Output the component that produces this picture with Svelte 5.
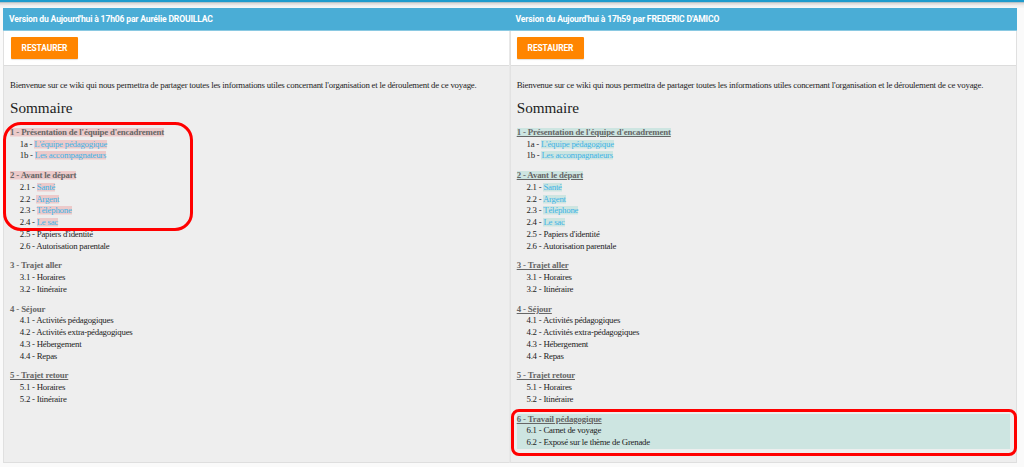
<script>
  const intro = "Bienvenue sur ce wiki qui nous permettra de partager toutes les informations utiles concernant l'organisation et le déroulement de ce voyage.";
  const sections = [
    { title: "1 - Présentation de l'équipe d'encadrement", mark: true, items: [['1a', "L'équipe pédagogique", true], ['1b', 'Les accompagnateurs', true]] },
    { title: '2 - Avant le départ', mark: true, items: [['2.1', 'Santé', true], ['2.2', 'Argent', true], ['2.3', 'Téléphone', true], ['2.4', 'Le sac', true], ['2.5', "Papiers d'identité"], ['2.6', 'Autorisation parentale']] },
    { title: '3 - Trajet aller', items: [['3.1', 'Horaires'], ['3.2', 'Itinéraire']] },
    { title: '4 - Séjour', items: [['4.1', 'Activités pédagogiques'], ['4.2', 'Activités extra-pédagogiques'], ['4.3', 'Hébergement'], ['4.4', 'Repas']] },
    { title: '5 - Trajet retour', underlined: true, items: [['5.1', 'Horaires'], ['5.2', 'Itinéraire']] }
  ];
  const added = { title: '6 - Travail pédagogique', added: true, items: [['6.1', 'Carnet de voyage'], ['6.2', 'Exposé sur le thème de Grenade']] };
  const versions = [
    { kind: 'old', label: "Version du Aujourd'hui à 17h06 par Aurélie DROUILLAC", sections },
    { kind: 'new', label: "Version du Aujourd'hui à 17h59 par FREDERIC D'AMICO", sections: [...sections, added] }
  ];
</script>

<div class="topbar"></div>
<main>
  {#each versions as v}
    <section class="version {v.kind}">
      <header>{v.label}</header>
      <div class="actions"><button>RESTAURER</button></div>
      <article>
        <p>{intro}</p>
        <h1>Sommaire</h1>
        {#each v.sections as s}
          <div class="group" class:added={s.added}>
            <h2><span class:mark={s.mark} class:underlined={s.underlined}>{s.title}</span></h2>
            {#each s.items as [num, text, link]}
              <div class="item">{num} - {#if link}<span class="mark link">{text}</span>{:else}{text}{/if}</div>
            {/each}
          </div>
        {/each}
      </article>
      <div class="outline"></div>
    </section>
  {/each}
</main>

<style>
  :global(body) { margin: 0; background: #fafafa; overflow: hidden; }
  .topbar { height: 8px; background: linear-gradient(#1e9bcd 0 2px, #b5c3c9 2px 3px, #dedbda 3px 4px, #ededed 5px, #f8f8f8 8px); }
  main { display: grid; grid-template-columns: 507px 507px; width: 1014px; height: 455px; margin-left: 3px; }
  .version { position: relative; display: flex; flex-direction: column; box-sizing: border-box; border-left: 1px solid #e0e0e0; border-bottom: 1px solid #dedede; }
  .old { border-right: 1px solid #e8e8e8; }
  .new { border-left-color: #e2e2e2; border-right: 1px solid #e0e0e0; }
  header { height: 22px; margin: 0 -1px; padding-left: 6px; border-bottom: 1px solid #8ac9e2; background: #4aadd6; color: #fff; font: 700 8.6px/22px Roboto, sans-serif; letter-spacing: -0.175px; white-space: nowrap; }
  .new header { padding-left: 5.6px; }
  .actions { box-sizing: border-box; height: 35px; padding: 6px 0 0 7px; background: #fff; border-bottom: 1px solid #dcdcdc; }
  button { display: block; width: 67px; height: 22px; padding: 0; border: 0; border-radius: 1px; background: #ff8500; color: #fff; font: 700 8.4px/20.5px Roboto, sans-serif; letter-spacing: -0.08px; box-shadow: 0 1px 1px #0002; }
  .new button { margin-left: -1px; }
  article { flex: 1; padding: 14px 6px 0; background: #eee; color: #1c1c1c; font: 8.8px/11.77px "Liberation Serif", serif; letter-spacing: -0.235px; white-space: nowrap; }
  .new article { padding-left: 5.7px; }
  p { margin: 0; letter-spacing: -0.206px; }
  h1 { margin: 7px 0 10.2px; font-size: 15.2px; line-height: 18px; font-weight: 400; letter-spacing: 0; }
  h2 { margin: 0; font-size: 8.8px; line-height: 11.77px; color: #666; letter-spacing: -0.15px; }
  .group { margin-bottom: 7.95px; }
  .item { padding-left: 9.8px; }
  .link { color: #42b4e6; }
  .old .mark { background: linear-gradient(#eccaca, #eccaca) 0 1px / 100% 8.5px no-repeat; }
  .new .mark { background: linear-gradient(#cde5e1, #cde5e1) 0 1px / 100% 8.5px no-repeat; }
  .underlined, .new h2 span { text-decoration: underline; text-decoration-thickness: 1px; }
  .added { background: #cde5e1; }
  .outline { position: absolute; box-sizing: border-box; border: 3px solid #f00; }
  .old .outline { left: -1px; top: 113.5px; width: 190px; height: 109.5px; border-radius: 18px; }
  .new .outline { left: 0; top: 401px; width: 506px; height: 47px; border-radius: 8px; }
</style>
